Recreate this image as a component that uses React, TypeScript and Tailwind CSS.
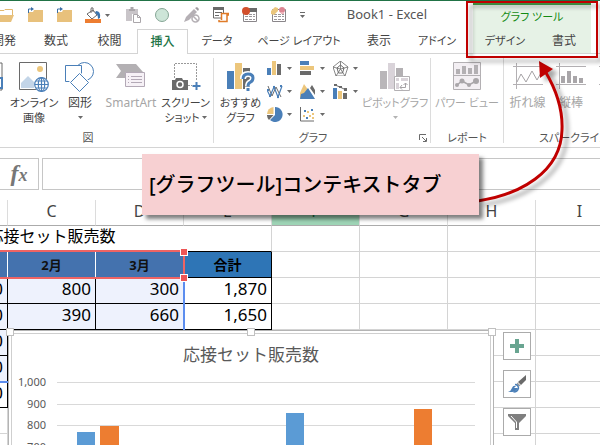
import type { ReactNode } from 'react'
import clsx from 'clsx'

const GRAY = '#6a6a6a'
const BLUE = '#4a7fb8'
const SAND = '#ecc67c'

function Caret({ className }: { className?: string }) {
  return (
    <svg className={clsx('shrink-0', className)} width="5" height="3" viewBox="0 0 5 3" aria-hidden="true">
      <path d="M0 0h5L2.5 3z" fill="#6a6a6a" />
    </svg>
  )
}

/* ---------- quick access toolbar ---------- */

function FolderIcon({ arrow }: { arrow?: boolean }) {
  return (
    <svg width="16" height="16" viewBox="0 0 16 16">
      {arrow ? (
        <>
          <path d="M1 5h5l1-2h9v12H1z" fill="#e8c17c" />
          <path d="M1.500 6V2h3" fill="none" stroke="#3a6ea5" />
          <path d="M4 0l3 2-3 2z" fill="#3a6ea5" />
        </>
      ) : (
        <>
          <path d="M0 3.500h6l1-1h7.500V8" fill="none" stroke="#e2b96f" />
          <path d="M0 8h16l-3 7H0z" fill="#e8c17c" />
        </>
      )}
    </svg>
  )
}

function BucketIcon() {
  return (
    <svg width="16" height="16" viewBox="0 0 16 16">
      <path d="M2 7l6-4 4 5-5 4z" fill="#fff" stroke={GRAY} />
      <path d="M6 6V2q0-2 2-1v4" fill="none" stroke={GRAY} />
      <path d="M11 4q5 0 4 7l-2 1q0-5-3-6z" fill="#3a75b0" />
      <path d="M0 12h16v4H0z" fill="#ed7d31" />
    </svg>
  )
}

function PasteIcon() {
  return (
    <svg width="16" height="16" viewBox="0 0 16 16">
      <path d="M0 2h12v5H6v7H0z" fill="#c9c5c9" />
      <path d="M3 4h6V2H7.500V0h-3v2H3z" fill="#aaa6aa" />
      <path d="M7.500 7.500h4l3 3v5h-7z" fill="#fff" stroke="#aaa6aa" />
      <path d="M11.500 7.500v3h3" fill="none" stroke="#aaa6aa" />
    </svg>
  )
}

function PenIcon() {
  return (
    <svg width="16" height="16" viewBox="0 0 16 16">
      <path d="M0 15l2-5 8-8 3 3-8 8z" fill="#b5b0b5" />
      <path d="M11 1l2-1 2 2-1 2z" fill="#a09ba0" />
      <circle cx="11.500" cy="11.500" r="3.500" fill="#fff" stroke="#b5b0b5" strokeWidth="1.500" />
      <path d="M9 9l5 5" stroke="#b5b0b5" strokeWidth="1.500" />
    </svg>
  )
}

function ScriptIcon() {
  return (
    <svg width="16" height="16" viewBox="0 0 16 16">
      <path d="M.5 1h10v10H.5z" fill="#fff" stroke={GRAY} />
      <path d="M0 0h11v3H0z" fill={GRAY} />
      <path d="M2 5.500h7M2 8.500h4" stroke={GRAY} />
      <path d="M8.500 13V6.500h7V8H14v6.500H6V13" fill="#fff" stroke="#e07b28" strokeWidth="1.500" />
    </svg>
  )
}

function GridMarkIcon({ record }: { record?: boolean }) {
  return (
    <svg width="16" height="16" viewBox="0 0 16 16">
      <path d="M1.500 2.500h13v12h-13z" fill="#fff" stroke="#8a868a" />
      {record && <path d="M1 1h14v4H1z" fill={GRAY} />}
      <path d="M3 7.500h10M3 9.500h10M3 12.500h10" stroke="#9a969a" strokeDasharray="3 1" />
      {record ? (
        <circle cx="4" cy="4" r="4" fill="#d2502c" />
      ) : (
        <>
          <path d="M0 4l4-4 3 1v3L3 8 0 7z" fill="#eac67d" />
          <circle cx="11" cy="3" r="3" fill="#dc8592" />
          <path d="M10 5h3v2h-3z" fill="#eeb3ba" />
        </>
      )}
    </svg>
  )
}

function QuickAccess() {
  const items: { label: string; icon: ReactNode; caret?: boolean }[] = [
    { label: '開く', icon: <FolderIcon /> },
    { label: '上へ', icon: <FolderIcon arrow /> },
    { label: '移動', icon: <FolderIcon arrow /> },
    { label: '塗りつぶしの色', icon: <BucketIcon />, caret: true },
    { label: '貼り付け', icon: <PasteIcon /> },
    {
      label: '円',
      icon: (
        <svg width="16" height="16" viewBox="0 0 16 16">
          <circle cx="7" cy="8" r="6.500" fill="#cde5d8" stroke="#86a696" />
        </svg>
      ),
    },
    { label: 'インクの終了', icon: <PenIcon /> },
    { label: 'マクロの表示', icon: <ScriptIcon /> },
    { label: 'マクロの記録', icon: <GridMarkIcon record /> },
    { label: 'フォーム', icon: <GridMarkIcon /> },
  ]
  return (
    <div className="flex shrink-0 items-center gap-[13px]">
      {items.map((it) => (
        <button key={it.label} type="button" aria-label={it.label} className={clsx('flex shrink-0 items-center', it.caret && 'gap-1')}>
          {it.icon}
          {it.caret && <Caret className="mr-[3px]" />}
        </button>
      ))}
      <button type="button" aria-label="クイック アクセス ツール バーのユーザー設定" className="flex flex-col items-center gap-[2px]">
        <span className="h-px w-[5px] bg-[#6a6a6a]" />
        <Caret />
      </button>
    </div>
  )
}

/* ---------- ribbon tabs ---------- */

const TABS = [
  { label: '開発', cls: 'w-[52px] text-[12px]' },
  { label: '数式', cls: 'w-[52px] text-[12px]' },
  { label: '校閲', cls: 'w-[55px] text-[12px]' },
  { label: '挿入', cls: 'w-[51px] text-[12px]', active: true },
  { label: 'データ', cls: 'w-[58px] text-[11px]' },
  { label: 'ページ レイアウト', cls: 'w-[106px] text-[11px]' },
  { label: '表示', cls: 'w-[54px] text-[12px]' },
  { label: 'アドイン', cls: 'w-[62px] text-[11px]' },
]

function Header() {
  return (
    <header className="flex border-t border-[#217346] [font-feature-settings:'palt']">
      <div className="flex w-[473px] shrink-0 flex-col">
        <div className="flex h-7 items-center justify-between">
          <div className="-ml-[2px]">
            <QuickAccess />
          </div>
          <h1 className="mr-[46px] text-[13px] text-[#555]">Book1 - Excel</h1>
        </div>
        <nav className="-ml-[22px] flex h-[25px]">
          {TABS.map((t) => (
            <button
              key={t.label}
              type="button"
              className={clsx(
                'shrink-0 text-center whitespace-nowrap',
                t.cls,
                t.active
                  ? 'border-x border-t border-[#d4d4d4] bg-white font-medium text-[#217346]'
                  : 'border-b border-[#d4d4d4] text-[#444]',
              )}
            >
              {t.label}
            </button>
          ))}
          <span className="flex-1 border-b border-[#d4d4d4]" />
        </nav>
      </div>
      <div className="relative w-[118px] shrink-0 border-t-4 border-[#439a46] bg-[#e6f2e6]">
        <div className="flex h-6 items-center justify-center text-[11px] text-[#138a13]">グラフ ツール</div>
        <nav className="flex h-[25px] border-b border-[#d4d4d4]">
          <button type="button" className="w-16 text-center text-[11px] whitespace-nowrap text-[#444]">デザイン</button>
          <button type="button" className="w-[54px] text-center text-[12px] whitespace-nowrap text-[#444]">書式</button>
        </nav>
        <div className="absolute -inset-x-[7px] -top-1 -bottom-1 z-20 border-2 border-[#c00000] drop-shadow-[4px_4px_2px_rgba(0,0,0,0.4)]" />
      </div>
      <div className="flex-1 border-b border-[#d4d4d4]" />
    </header>
  )
}

/* ---------- ribbon icons ---------- */

function MonitorIcon() {
  return (
    <svg width="30" height="30" viewBox="0 0 30 30">
      <path d="M1 1h28v27H1z" fill="#fff" stroke={GRAY} />
      <path d="M16 16h13v10H16z" fill="#fff" stroke={BLUE} strokeWidth="2" />
    </svg>
  )
}

function OnlinePictureIcon() {
  return (
    <svg width="30" height="30" viewBox="0 0 30 30">
      <path d="M.5.5h27v27H.5z" fill="#fff" stroke={GRAY} />
      <circle cx="21" cy="7" r="3" fill={SAND} />
      <path d="M2 26v-5l7-7 6 6v6z" fill="#c3d5e8" />
      <circle cx="22.500" cy="22.500" r="7.500" fill="#fff" />
      <g fill="none" stroke={BLUE} strokeWidth="1.200">
        <circle cx="22.500" cy="22.500" r="6.800" />
        <ellipse cx="22.500" cy="22.500" rx="3.200" ry="6.800" />
        <path d="M16 22.500h13M17 19h11M17 26h11M22.500 16v13" />
      </g>
    </svg>
  )
}

function ShapesIcon() {
  return (
    <svg width="30" height="30" viewBox="0 0 30 30" fill="#fff" stroke={BLUE}>
      <circle cx="19.500" cy="9.500" r="9" />
      <path d="M.5 3.500h16v16H.5z" />
      <path d="M14.500 11.500l9 9-9 9-9-9z" stroke="#fff" strokeWidth="3" />
      <path d="M14.500 11.500l9 9-9 9-9-9z" />
    </svg>
  )
}

function SmartArtIcon() {
  return (
    <svg width="30" height="30" viewBox="0 0 30 30">
      <path d="M0 2h20l7 8H10v6H0l5-7z" fill="#b3b0b3" />
      <path d="M9.500 10.500h19v14h-19z" fill="#f6f1f6" stroke="#b3a9b6" />
      <path d="M12 14.500h1M15 14.500h11M12 17.500h1M15 17.500h11M12 20.500h1M15 20.500h11" stroke="#b3a9b6" />
    </svg>
  )
}

function ScreenshotIcon() {
  return (
    <svg width="30" height="30" viewBox="0 0 30 30">
      <path d="M3.500 16V1.500h22V18M17 23.500h4" fill="none" stroke="#999" strokeDasharray="2 1" />
      <path d="M1 18h3l1-2h6l1 2h5v10H1z" fill={GRAY} />
      <circle cx="9" cy="22.500" r="3" fill={GRAY} stroke="#fff" strokeWidth="1.500" />
      <path d="M25.500 20v8M21.500 24h8" stroke={BLUE} strokeWidth="2" />
    </svg>
  )
}

function RecommendedIcon() {
  return (
    <svg width="30" height="30" viewBox="0 0 30 30">
      <path d="M1 9h7v18H1z" fill={BLUE} />
      <path d="M9 1h7v26H9z" fill={SAND} />
      <path d="M17 6h7v21h-7z" fill={GRAY} />
      <g fill="none">
        <path d="M17 17q0-5 5-5t5 4q0 3-3 4.500-2 1-2 4M22 25v4" stroke="#fff" strokeWidth="6" />
        <path d="M17 17q0-5 5-5t5 4q0 3-3 4.500-2 1-2 4M22 26v3" stroke={BLUE} strokeWidth="3" />
      </g>
    </svg>
  )
}

function PivotChartIcon() {
  return (
    <svg width="30" height="30" viewBox="0 0 30 30">
      <path d="M0 9h7v18H0z" fill="#b9b6b9" />
      <path d="M8 1h7v26H8z" fill="#d9d3d9" />
      <path d="M16 6h7v20h-7z" fill="#b3b0b3" />
      <path d="M14.500 14.500h15v14h-15z" fill="#fff" stroke="#b3b0b3" />
      <path d="M16 16h3v3h-3zM21 16h7v3h-7zM16 21h3v6h-3z" fill="#d9d3d9" />
      <path d="M20 25.500h5.500V21M22 23l-2 2.500 2 2M23.500 23l2-2 2 2" fill="none" stroke="#a5a2a5" />
    </svg>
  )
}

function PowerViewIcon() {
  return (
    <svg width="30" height="30" viewBox="0 0 30 30">
      <path d="M1.500.5h27v27h-27z" fill="#f3eff3" stroke="#b3b0b3" />
      <path d="M1 13.500h28" stroke="#b3b0b3" />
      <path d="M4 7h4v5H4zM10 4h4v8h-4zM16 6h4v6h-4zM22 3h4v9h-4z" fill="#b3b0b3" />
      <path d="M5 23l5-4 7 4 7-4" fill="none" stroke="#a9a6a9" strokeWidth="1.500" />
      <circle cx="5" cy="23" r="2" fill="#a9a6a9" />
      <circle cx="10" cy="19" r="2.500" fill="#a9a6a9" />
      <circle cx="17" cy="23" r="2" fill="#a9a6a9" />
      <circle cx="24" cy="19" r="3" fill="#a9a6a9" />
    </svg>
  )
}

function SparkLineIcon() {
  return (
    <svg width="30" height="30" viewBox="0 0 30 30" fill="none" stroke="#b3b0b3">
      <path d="M0 4.500h30M0 22.500h30M3.500 1v26" />
      <path d="M4 20l4-8 5 8 6-11 5 9 5-9" stroke="#a5a2a5" />
    </svg>
  )
}

function SparkColumnIcon() {
  return (
    <svg width="30" height="30" viewBox="0 0 30 30">
      <path d="M0 4.500h30M0 22.500h30M3.500 1v26" fill="none" stroke="#b3b0b3" />
      <path d="M5 14h4v7H5zM11 9h4v12h-4zM17 14h4v7h-4zM23 16h4v5h-4z" fill="#a9a6a9" />
    </svg>
  )
}

const MINI_CHARTS: { label: string; art: ReactNode }[] = [
  {
    label: '縦棒',
    art: (
      <>
        <path d="M0 7h4v7H0z" fill={BLUE} />
        <path d="M5 0h4v14H5z" fill={SAND} />
        <path d="M10 3h4v11h-4z" fill={GRAY} />
      </>
    ),
  },
  {
    label: '横棒',
    art: (
      <>
        <path d="M0 0h9v4H0z" fill={BLUE} />
        <path d="M0 5h14v4H0z" fill={SAND} />
        <path d="M0 10h11v4H0z" fill={GRAY} />
      </>
    ),
  },
  {
    label: 'レーダー',
    art: (
      <g fill="none" stroke={GRAY}>
        <path d="M7.500 0L15 6l-3 9H3L0 6z" strokeWidth=".8" />
        <path d="M7.500 4l3.500 3-1.500 5h-4L4 7z" />
        <path d="M7.500 0v8L15 6M7.500 8l4.500 7M7.500 8L3 15M7.500 8L0 6" strokeWidth=".8" />
      </g>
    ),
  },
  {
    label: '折れ線',
    art: (
      <g fill="none">
        <path d="M1 2l4 10 4-9 5 10" stroke={GRAY} />
        <path d="M0 6l3 6 4-9 4 10 4-11" stroke={BLUE} strokeWidth="1.200" />
        <path d="M0 5h2v2H0zM2 11h2v2H2zM6 2h2v2H6zM10 12h2v2h-2zM13 1h2v2h-2z" fill={BLUE} />
      </g>
    ),
  },
  {
    label: '面',
    art: (
      <>
        <path d="M0 9l4-9 5 7-3 7H0z" fill={SAND} />
        <path d="M10 4l2-3 3 5v5z" fill={GRAY} />
        <path d="M0 15l1-5 3-1 4-5 7 11z" fill={BLUE} />
      </>
    ),
  },
  {
    label: '複合',
    art: (
      <>
        <path d="M0 4h4v11H0z" fill={BLUE} />
        <path d="M5 7h4v8H5z" fill={SAND} />
        <path d="M10 9h4v6h-4z" fill={GRAY} />
        <path d="M2 1l5 2 6 3" fill="none" stroke={GRAY} />
        <path d="M1 0h3v2H1zM6 2h3v2H6zM11 4h3v3h-3z" fill={GRAY} />
      </>
    ),
  },
  {
    label: '円',
    art: (
      <>
        <path d="M6.500 7V0A7 7 0 0 0 0 7z" fill={SAND} />
        <path d="M6.500 8H0a7 7 0 0 0 2 5z" fill={GRAY} />
        <path d="M8 0a7.500 7.500 0 1 1-5 13l5-5z" fill={BLUE} />
      </>
    ),
  },
  {
    label: '散布図',
    art: (
      <>
        <path d="M.5 0v14H14" fill="none" stroke={GRAY} />
        <path d="M3 8h2v2H3zM7 4h2v2H7zM12 6h2v2h-2z" fill={SAND} />
        <path d="M4 3h2v2H4zM6 10h2v2H6zM11 2h2v2h-2z" fill={BLUE} />
        <path d="M9 8h2v2H9zM12 10h2v2h-2z" fill={SAND} />
      </>
    ),
  },
]

/* ---------- ribbon ---------- */

type BigButtonProps = {
  icon: ReactNode
  lines: string[]
  cls: string
  muted?: boolean
  caret?: 'below' | 'inline'
}

function BigButton({ icon, lines, cls, muted, caret }: BigButtonProps) {
  return (
    <button
      type="button"
      className={clsx(
        'flex shrink-0 flex-col items-center pt-px leading-[15px] whitespace-nowrap',
        cls,
        muted ? 'text-[#a6a6a6]' : 'text-[#444]',
      )}
    >
      <span className="mb-[3px]">{icon}</span>
      {lines.map((l, i) => (
        <span key={l} className="flex items-center gap-[2px]">
          {l}
          {caret === 'inline' && i === lines.length - 1 && <Caret />}
        </span>
      ))}
      {caret === 'below' && <Caret className={clsx('mt-[6px]', muted && 'opacity-50')} />}
    </button>
  )
}

function Group({ label, cls, launcher, children }: { label: string; cls: string; launcher?: boolean; children: ReactNode }) {
  return (
    <section className={clsx('flex shrink-0 flex-col justify-between pt-[7px]', cls)}>
      <div className="flex items-start">{children}</div>
      <div className="flex items-center pb-px text-[11px] leading-4 text-[#555]">
        <span className="flex-1 text-center">{label}</span>
        {launcher && (
          <button type="button" aria-label="すべてのグラフを表示" className="w-[18px] pl-[7px]">
            <svg width="8" height="8" viewBox="0 0 8 8" fill="none" stroke={GRAY}>
              <path d="M.5 6V.5H7M3 3l4 4M7.500 4v3.500H4" />
            </svg>
          </button>
        )}
      </div>
    </section>
  )
}

function Divider() {
  return <span className="my-1 w-px shrink-0 bg-[#dcdcdc]" />
}

function Ribbon() {
  return (
    <div className="flex h-[94px] shrink-0 overflow-hidden border-b border-[#d4d4d4] [font-feature-settings:'palt']">
      <Group label="図" cls="-ml-[37px] w-[250px]">
        <BigButton icon={<MonitorIcon />} lines={['画像']} cls="w-[49px] text-[12px]" />
        <BigButton icon={<OnlinePictureIcon />} lines={['オンライン', '画像']} cls="w-11 text-[11px]" />
        <BigButton icon={<ShapesIcon />} lines={['図形']} cls="w-12 text-[12px]" caret="below" />
        <BigButton icon={<SmartArtIcon />} lines={['SmartArt']} cls="w-[54px] text-[12px]" muted />
        <BigButton icon={<ScreenshotIcon />} lines={['スクリーン', 'ショット']} cls="w-[55px] text-[11px]" caret="inline" />
      </Group>
      <Divider />
      <Group label="グラフ" cls="w-[216px]" launcher>
        <BigButton icon={<RecommendedIcon />} lines={['おすすめ', 'グラフ']} cls="w-[53px] text-[11px]" />
        <div className="grid w-[99px] shrink-0 grid-cols-3 gap-y-2">
          {MINI_CHARTS.map((m) => (
            <button key={m.label} type="button" aria-label={m.label} className="flex items-center gap-1">
              <svg width="16" height="15" viewBox="0 0 16 15">{m.art}</svg>
              <Caret />
            </button>
          ))}
        </div>
        <BigButton icon={<PivotChartIcon />} lines={['ピボットグラフ']} cls="w-[58px] text-[11px]" muted caret="below" />
      </Group>
      <Divider />
      <Group label="レポート" cls="w-[72px]">
        <BigButton icon={<PowerViewIcon />} lines={['パワー ビュー']} cls="w-[72px] text-[11px]" muted />
      </Group>
      <Divider />
      <Group label="スパークライン" cls="w-[140px]">
        <BigButton icon={<SparkLineIcon />} lines={['折れ線']} cls="w-[47px] text-[12px]" muted />
        <BigButton icon={<SparkColumnIcon />} lines={['縦棒']} cls="w-10 text-[12px]" muted />
        <BigButton icon={<SparkColumnIcon />} lines={['勝敗']} cls="ml-[3px] w-10 text-[12px]" muted />
      </Group>
    </div>
  )
}

/* ---------- formula bar ---------- */

function FormulaBar() {
  return (
    <div className="relative flex shrink-0 gap-[3px] py-[10px]">
      <div className="flex h-8 w-[39px] items-center justify-center border border-l-0 border-[#c6c6c6] font-['Liberation_Serif',serif] text-[#777] italic">
        <button type="button" aria-label="関数の挿入" className="flex items-baseline font-bold">
          <span className="text-[24px] leading-6">f</span>
          <span className="text-[18px] leading-6">x</span>
        </button>
      </div>
      <input aria-label="数式バー" className="h-8 flex-1 border border-r-0 border-[#c6c6c6] px-2 outline-none" />
      <div className="absolute top-[6px] left-[142px] z-20 w-[337px] bg-[#f7d0d2] px-[7px] py-[14px] text-[20px] leading-[33px] font-medium whitespace-nowrap text-black shadow-[4px_4px_4px_rgba(0,0,0,0.5)]">
        [グラフツール]コンテキストタブ
      </div>
      <svg
        className="pointer-events-none absolute -top-[93px] left-[479px] z-10 drop-shadow-[5px_4px_2px_rgba(0,0,0,0.35)]"
        width="100"
        height="155"
        viewBox="0 0 100 155"
        aria-hidden="true"
      >
        <path d="M-2 146C41 140 82 117 83 75C84 53 75 31 66 16" fill="none" stroke="#c00000" strokeWidth="3" />
        <path d="M60 6l14 8-13 9z" fill="#c00000" />
      </svg>
    </div>
  )
}

/* ---------- worksheet ---------- */

const COLUMNS = ['B', 'C', 'D', 'E', 'F', 'G', 'H', 'I']
const MONTHS = ['1月', '2月', '3月']
const ROWS = [
  ['770', '800', '300', '1,870'],
  ['600', '390', '660', '1,650'],
  ['860', '', '', ''],
  ['500', '', '', ''],
]

const cell = 'h-[26px] border-r border-b'
const plain = 'border-[#d4d4d4]'
const number = 'border-black p-0 pr-1 pb-[3px] text-right leading-[20px] text-black'

function Blanks({ n }: { n: number }) {
  return Array.from({ length: n }, (_, i) => <td key={i} className={clsx(cell, plain)} />)
}

function Sheet() {
  return (
    <table className="-ml-20 w-[calc(100%+80px)] min-w-[704px] table-fixed border-separate border-spacing-0 text-[17px]">
      <colgroup>
        {COLUMNS.slice(0, -1).map((c) => (
          <col key={c} className="w-[88px]" />
        ))}
        <col />
      </colgroup>
      <thead>
        <tr>
          {COLUMNS.map((c) => (
            <th
              key={c}
              className={clsx(
                'h-[26px] border-r border-b border-r-[#dcdcdc] border-b-[#ababab] p-0 pb-[3px] text-[16px] leading-[22px] font-normal',
                c === 'F' ? 'bg-[#9fd5b7] text-[#217346]' : 'text-[#444]',
              )}
            >
              {c}
            </th>
          ))}
        </tr>
      </thead>
      <tbody>
        <tr>
          <td colSpan={3} className={clsx(cell, 'border-[#d4d4d4] border-r-transparent p-0 pb-1 text-center text-[16px] leading-[21px] text-black')}>
            応接セット販売数
          </td>
          <td className={clsx(cell, 'border-r-[#d4d4d4] border-b-black')} />
          <Blanks n={4} />
        </tr>
        <tr>
          {MONTHS.map((m) => (
            <th key={m} className={clsx(cell, 'border-r-white border-b-black bg-[#4472ae] p-0 text-[13px] leading-[20px] font-bold text-[#111]')}>
              {m}
            </th>
          ))}
          <th className={clsx(cell, 'border-black bg-[#2e75b6] p-0 text-[14px] leading-[20px] font-bold text-black')}>合計</th>
          <Blanks n={4} />
        </tr>
        {ROWS.map((r) => (
          <tr key={r[0]}>
            {r.map((v, i) => (
              <td key={i} className={clsx(cell, number, i < 3 && 'bg-[#eef2fd]')}>
                {v}
              </td>
            ))}
            <Blanks n={4} />
          </tr>
        ))}
        <tr>
          <td className={clsx(cell, number)}>2,730</td>
          <Blanks n={7} />
        </tr>
        {[0, 1, 2].map((i) => (
          <tr key={i}>
            <Blanks n={8} />
          </tr>
        ))}
      </tbody>
    </table>
  )
}

function RangeMarks() {
  return (
    <div className="pointer-events-none">
      <div className="absolute top-[79px] -left-5 h-[104px] w-[205px] border-r-2 border-b-2 border-[#5b8def]" />
      <div className="absolute top-[50px] -left-5 h-[29px] w-[205px] border-2 border-[#ee6464]" />
      <span className="absolute top-[48px] left-[180px] size-[8px] border border-white bg-[#ee5555]" />
      <span className="absolute top-[74px] left-[180px] size-[8px] border border-white bg-[#ee5555]" />
    </div>
  )
}

const AXIS = [
  { label: '1,000', y: 52 },
  { label: '900', y: 74 },
  { label: '800', y: 95 },
  { label: '700', y: 117 },
]

function Chart() {
  return (
    <figure className="absolute top-[130px] left-2 w-[486px] border border-b-0 border-[#b4b4b4] bg-white p-[2px]">
      <div className="relative border border-b-0 border-[#cfcfcf]">
        <figcaption className="pt-[7px] text-center text-[17px] leading-[27px] text-[#595959]">応接セット販売数</figcaption>
        <svg className="-mt-[37px] block" width="478" height="150" viewBox="4 1 478 150">
          {AXIS.map((a) => (
            <g key={a.label}>
              <path d={`M49 ${a.y + 0.5}h418`} stroke="#d9d9d9" />
              <text x="38" y={a.y + 4} textAnchor="end" fontSize="11" fill="#595959">
                {a.label}
              </text>
            </g>
          ))}
          <path d="M69 102h18v60H69zM278 83h18v80h-18z" fill="#5b9bd5" />
          <path d="M92 96h19v60H92zM406 79h18v80h-18z" fill="#ed7d31" />
        </svg>
      </div>
      <span className="absolute -top-[3px] -left-[3px] size-2 border border-[#c0c0c0] bg-white" />
      <span className="absolute -top-[3px] left-[238px] size-2 border border-[#c0c0c0] bg-white" />
      <span className="absolute -top-[3px] -right-[3px] size-2 border border-[#c0c0c0] bg-white" />
    </figure>
  )
}

function ChartButtons() {
  const box = 'flex size-7 items-center justify-center border border-[#ababab] bg-white'
  return (
    <div className="absolute top-[132px] left-[503px] flex flex-col gap-[10px]">
      <button type="button" aria-label="グラフ要素" className={box}>
        <svg width="14" height="14" viewBox="0 0 14 14">
          <path d="M5 0h4v5h5v4H9v5H5V9H0V5h5z" fill="#69a591" />
        </svg>
      </button>
      <button type="button" aria-label="グラフ スタイル" className={box}>
        <svg width="18" height="18" viewBox="0 0 18 18">
          <path d="M18 0v5l-5 5-3-3z" fill={GRAY} />
          <path d="M9.500 7.500l3 3-1.500 1-2.500-2.500z" fill="#9a9a9a" />
          <path d="M7 9.500q3 0 3.500 3.500-1 4-5 4" fill="none" stroke={BLUE} strokeWidth="1.500" />
          <path d="M0 17q3-1 4-4 1-3 4-2l-2 2h4q-2 4-6 4z" fill={BLUE} />
        </svg>
      </button>
      <button type="button" aria-label="グラフ フィルター" className={box}>
        <svg width="18" height="18" viewBox="0 0 18 18">
          <path d="M0 1h18v2l-7 7v7H7v-7L0 3z" fill="#7f7f7f" />
          <path d="M3 3l5.500 6v6" fill="none" stroke="#fff" />
        </svg>
      </button>
    </div>
  )
}

export default function App() {
  return (
    <div className="flex h-screen flex-col overflow-hidden bg-white font-['Noto_Sans','Noto_Sans_CJK_JP',sans-serif]">
      <Header />
      <Ribbon />
      <FormulaBar />
      <main className="relative flex-1 overflow-hidden">
        <Sheet />
        <RangeMarks />
        <Chart />
        <ChartButtons />
      </main>
    </div>
  )
}
